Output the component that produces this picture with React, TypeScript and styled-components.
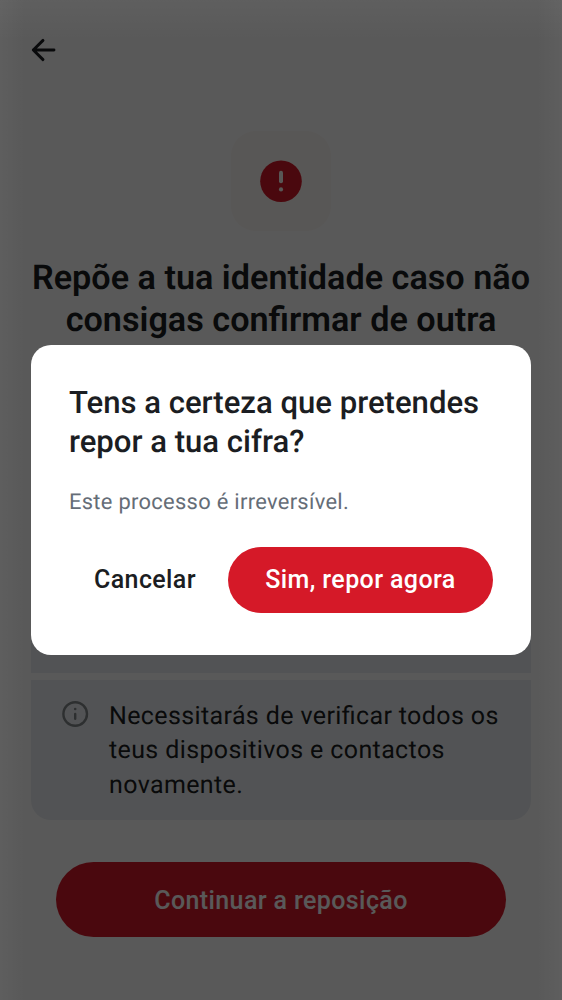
import React from "react";
import styled, { createGlobalStyle } from "styled-components";

const GlobalStyle = createGlobalStyle`
  *, *::before, *::after { box-sizing: border-box; }
  html, body { margin: 0; padding: 0; }
  body { font-family: Roboto, "Liberation Sans", sans-serif; color: #1b1d22; overflow: hidden; text-rendering: geometricPrecision; }
  button { border: 0; padding: 0; font: inherit; background: none; }
`;

const Screen = styled.div`
  position: relative;
  width: 562px;
  height: 1000px;
  overflow: hidden;
  background: #ffffff;
`;

const Page = styled.main`
  display: flex;
  flex-direction: column;
  height: 100%;
  padding: 0 31px;
`;

const TopBar = styled.header`
  display: flex;
  align-items: center;
  height: 100px;
`;

const BackButton = styled.button`
  display: flex;
  width: 25px;
  height: 24px;
`;

const IconTile = styled.div`
  display: flex;
  align-items: center;
  justify-content: center;
  align-self: center;
  width: 100px;
  height: 100px;
  margin-top: 31px;
  border-radius: 25px;
  background: #fdf9f5;
`;

const Heading = styled.h1`
  height: 215px;
  margin: 26px -6px 0;
  font-size: 34.2px;
  line-height: 42.2px;
  font-weight: 600;
  text-align: center;
`;

const NoticeList = styled.ul`
  display: flex;
  flex-direction: column;
  gap: 7px;
  height: 348px;
  margin: 0;
  padding: 0;
  list-style: none;
`;

const Notice = styled.li<{ $height: number; $position?: "first" | "last" }>`
  display: flex;
  gap: 20px;
  flex: 0 0 ${({ $height }) => $height}px;
  padding: 20px 31px 16px;
  background: #ebeef2;
  border-radius: ${({ $position }) =>
    $position === "first" ? "20px 20px 0 0" : $position === "last" ? "0 0 20px 20px" : "0"};
  font-size: 25px;
  line-height: 34.4px;
  letter-spacing: 0.38px;
  font-feature-settings: "liga" 1;
  white-space: nowrap;

  svg { flex: none; }
`;

const PillButton = styled.button<{ $width: number; $height: number; $padTop?: number }>`
  display: flex;
  align-items: center;
  justify-content: center;
  width: ${({ $width }) => $width}px;
  height: ${({ $height }) => $height}px;
  padding-top: ${({ $padTop = 0 }) => $padTop}px;
  border-radius: 999px;
  background: #d51928;
  color: #ffffff;
  font-size: 25px;
  font-weight: 500;
  letter-spacing: 0.39px;
  white-space: nowrap;
`;

const PageFooter = styled.footer`
  display: flex;
  justify-content: center;
  padding-top: 42.3px;
`;

const Scrim = styled.div`
  position: absolute;
  inset: 0;
  display: flex;
  justify-content: center;
  align-items: center;
  background:
    linear-gradient(90deg, rgba(255, 255, 255, 0.03), transparent 25px, transparent 537px, rgba(255, 255, 255, 0.03)),
    linear-gradient(180deg, rgba(255, 255, 255, 0.035), transparent 40px),
    rgba(0, 0, 0, 0.65);
`;

const Dialog = styled.section`
  width: 500px;
  height: 309.4px;
  padding: 37.7px 38px;
  border-radius: 20px;
  background: #ffffff;
`;

const DialogTitle = styled.h2`
  margin: 0;
  font-size: 31.1px;
  line-height: 39px;
  font-weight: 500;
  white-space: nowrap;
`;

const DialogText = styled.p`
  margin: 26px 0 0;
  font-size: 21.9px;
  line-height: 31px;
  letter-spacing: 0.3px;
  color: #656d77;
`;

const DialogActions = styled.div`
  display: flex;
  align-items: center;
  justify-content: space-between;
  margin: 29px 0 0 25px;
`;

const CancelButton = styled.button`
  color: #1b1d22;
  font-size: 25px;
  font-weight: 500;
  letter-spacing: 0.39px;
`;

const BackIcon = () => (
  <svg width="25" height="24" viewBox="0 0 25 24" fill="none" stroke="#1b1d22" strokeWidth="2.9" strokeLinecap="round" strokeLinejoin="round">
    <path d="M12 2.4 2.3 12l9.7 9.6M2.3 12h20.7" />
  </svg>
);

const ErrorIcon = () => (
  <svg width="42" height="42" viewBox="0 0 42 42">
    <circle cx="21" cy="21.2" r="20.8" fill="#d51928" />
    <rect x="19" y="10.8" width="4" height="12.4" rx="1.9" fill="#fdf9f5" />
    <circle cx="21" cy="29.4" r="2.1" fill="#fdf9f5" />
  </svg>
);

const InfoIcon = () => (
  <svg width="27" height="27" viewBox="0 0 27 27">
    <circle cx="13.2" cy="14" r="11.8" fill="none" stroke="#818689" strokeWidth="2.4" />
    <circle cx="13.2" cy="9" r="1.3" fill="#818689" />
    <rect x="12" y="12.8" width="2.4" height="7.2" rx="1.2" fill="#818689" />
  </svg>
);

export default function App() {
  return (
    <>
      <GlobalStyle />
      <Screen>
        <Page>
          <TopBar>
            <BackButton aria-label="Voltar"><BackIcon /></BackButton>
          </TopBar>
          <IconTile><ErrorIcon /></IconTile>
          <Heading>Repõe a tua identidade caso não<br />consigas confirmar de outra</Heading>
          <NoticeList>
            <Notice $height={96} $position="first" />
            <Notice $height={98} />
            <Notice $height={140} $position="last">
              <InfoIcon />
              <span>Necessitarás de verificar todos os<br />teus dispositivos e contactos<br />novamente.</span>
            </Notice>
          </NoticeList>
          <PageFooter>
            <PillButton $width={450} $height={75} $padTop={2}>Continuar a reposição</PillButton>
          </PageFooter>
        </Page>
        <Scrim>
          <Dialog role="dialog" aria-modal="true">
            <DialogTitle>Tens a certeza que pretendes<br />repor a tua cifra?</DialogTitle>
            <DialogText>Este processo é irreversível.</DialogText>
            <DialogActions>
              <CancelButton>Cancelar</CancelButton>
              <PillButton $width={265} $height={65.6}>Sim, repor agora</PillButton>
            </DialogActions>
          </Dialog>
        </Scrim>
      </Screen>
    </>
  );
}
